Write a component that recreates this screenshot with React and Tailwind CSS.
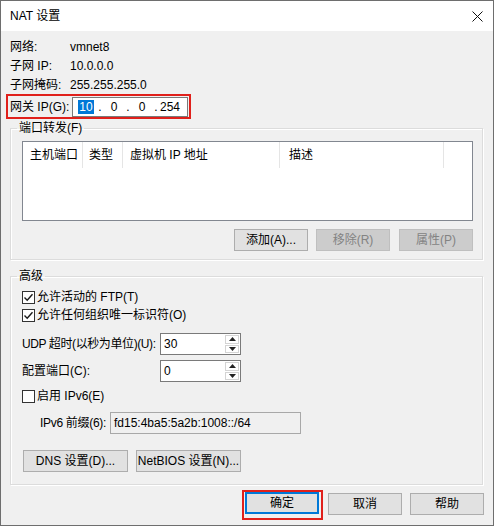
import React from "react";

const Check = ({ checked }) => (
  <span className="w-[13px] h-[13px] border border-[#333333] bg-white flex items-center justify-center shrink-0">
    {checked && (
      <svg width="11" height="11" viewBox="0 0 11 11">
        <path d="M1.5 5.5 L4.2 8.2 L9.5 2.2" fill="none" stroke="#1a1a1a" strokeWidth="1.4" />
      </svg>
    )}
  </span>
);

const Btn = ({ children, className = "", disabled }) => (
  <div
    className={
      "h-[22px] w-[74px] shrink-0 flex items-center justify-center border " +
      (disabled
        ? "bg-[#cccccc] border-[#bfbfbf] text-[#838383] "
        : "bg-[#e1e1e1] border-[#adadad] ") +
      className
    }
  >
    {children}
  </div>
);

const Spin = ({ value }) => (
  <div className="w-[81px] h-[22px] shrink-0 border border-[#7a7a7a] bg-white flex">
    <span className="pl-[3px] leading-[20px]">{value}</span>
    <div className="ml-auto w-[16px] flex flex-col p-[1px] gap-[1px]">
      <div className="flex-1 border border-[#d4d4d4] flex items-center justify-center">
        <svg width="7" height="4" viewBox="0 0 7 4">
          <path d="M0 4 L3.5 0 L7 4 Z" fill="#222" />
        </svg>
      </div>
      <div className="flex-1 border border-[#d4d4d4] flex items-center justify-center">
        <svg width="7" height="4" viewBox="0 0 7 4">
          <path d="M0 0 L3.5 4 L7 0 Z" fill="#222" />
        </svg>
      </div>
    </div>
  </div>
);

const groupBox =
  "w-[473px] border border-[#dcdcdc] shadow-[inset_1px_1px_0_#ffffff,1px_1px_0_#ffffff]";

export default function App() {
  return (
    <div className="w-[494px] h-[526px] border border-[#6e6e6e] bg-[#f0f0f0] flex flex-col text-[12px] leading-[16px] text-black whitespace-nowrap font-['Liberation_Sans','Noto_Sans_CJK_SC',sans-serif] overflow-hidden">
      {/* title bar */}
      <div className="h-[30px] bg-white flex items-center justify-between pl-[9px] pr-[10px] shrink-0">
        <span className="text-[12px]">NAT 设置</span>
        <svg width="11" height="11" viewBox="0 0 11 11">
          <path d="M0.5 0.5 L10.5 10.5 M10.5 0.5 L0.5 10.5" stroke="#111" strokeWidth="1" />
        </svg>
      </div>

      <div className="flex-1 pl-[9px] pt-[7px]">
        <div className="h-[18px] flex items-center">
          <span className="w-[60px] shrink-0">网络:</span>
          <span>vmnet8</span>
        </div>
        <div className="h-[19px] flex items-center">
          <span className="w-[60px] shrink-0">子网 IP:</span>
          <span>10.0.0.0</span>
        </div>
        <div className="h-[19px] flex items-center">
          <span className="w-[60px] shrink-0">子网掩码:</span>
          <span>255.255.255.0</span>
        </div>

        {/* gateway */}
        <div className="ml-[-4px] w-[185px] h-[25px] border-2 border-[#e0201b] flex items-center">
          <span className="w-[64px] shrink-0 pl-[2px]">网关 IP(G):</span>
          <div className="w-[116px] h-[20px] border border-[#7a7a7a] bg-white flex items-center pl-[1px]">
            <span className="w-[24px] text-center">
              <span className="bg-[#0078d7] text-white px-[1px]">10</span>
            </span>
            <span className="w-[4px] text-center">.</span>
            <span className="w-[24px] text-center">0</span>
            <span className="w-[4px] text-center">.</span>
            <span className="w-[24px] text-center">0</span>
            <span className="w-[4px] text-center">.</span>
            <span className="w-[24px] text-center">254</span>
          </div>
        </div>

        {/* port forwarding */}
        <fieldset className={groupBox + " mt-[2px] pb-[8px]"}>
          <legend className="ml-[6px] px-[2px] leading-[14px]">端口转发(F)</legend>
          <div className="ml-[11px] w-[451px]">
            <div className="mt-[6px] h-[80px] border border-[#828790] bg-white">
              <div className="h-[26px] flex">
                <div className="w-[60px] pl-[7px] flex items-center border-r border-[#e5e5e5]">主机端口</div>
                <div className="w-[40px] pl-[6px] flex items-center border-r border-[#e5e5e5]">类型</div>
                <div className="w-[157px] pl-[7px] flex items-center border-r border-[#e5e5e5]">虚拟机 IP 地址</div>
                <div className="w-[164px] pl-[9px] flex items-center border-r border-[#e5e5e5]">描述</div>
              </div>
            </div>
            <div className="mt-[8px] flex justify-end gap-[8px]">
              <Btn>添加(A)...</Btn>
              <Btn disabled className="mr-[1px]">移除(R)</Btn>
              <Btn disabled>属性(P)</Btn>
            </div>
          </div>
        </fieldset>

        {/* advanced */}
        <fieldset className={groupBox + " mt-[9px] pb-[12px]"}>
          <legend className="ml-[6px] px-[2px] leading-[14px]">高级</legend>
          <div className="mt-[5px] h-[18px] pl-[11px] flex items-center gap-[2px]">
            <Check checked />
            <span>允许活动的 FTP(T)</span>
          </div>
          <div className="h-[18px] pl-[11px] flex items-center gap-[2px]">
            <Check checked />
            <span>允许任何组织唯一标识符(O)</span>
          </div>
          <div className="mt-[9px] h-[22px] pl-[11px] flex items-center">
            <span className="w-[138px] shrink-0 tracking-[-0.4px]">UDP 超时(以秒为单位)(U):</span>
            <Spin value="30" />
          </div>
          <div className="mt-[5px] h-[22px] pl-[11px] flex items-center">
            <span className="w-[138px] shrink-0">配置端口(C):</span>
            <Spin value="0" />
          </div>
          <div className="mt-[5px] h-[18px] pl-[11px] flex items-center gap-[2px]">
            <Check />
            <span>启用 IPv6(E)</span>
          </div>
          <div className="mt-[7px] h-[22px] pl-[29px] flex items-center">
            <span className="w-[70px] shrink-0 tracking-[-0.3px]">IPv6 前缀(6):</span>
            <div className="w-[191px] h-[22px] border border-[#a8a8a8] bg-[#f0f0f0] pl-[3px] leading-[20px]">
              fd15:4ba5:5a2b:1008::/64
            </div>
          </div>
          <div className="mt-[16px] pl-[12px] flex gap-[8px]">
            <Btn className="w-[105px] h-[21px]">DNS 设置(D)...</Btn>
            <Btn className="w-[105px] h-[21px]">NetBIOS 设置(N)...</Btn>
          </div>
        </fieldset>

        {/* footer */}
        <div className="mt-[5px] w-[474px] flex justify-end items-start">
          <div className="w-[81px] h-[30px] border-2 border-[#e0201b] pl-[1px]">
            <div className="h-[22px] w-[74px] flex items-center justify-center border-2 border-[#0078d7] bg-[#e1e1e1]">
              确定
            </div>
          </div>
          <Btn className="mt-[3px] ml-[5px]">取消</Btn>
          <Btn className="mt-[3px] ml-[8px]">帮助</Btn>
        </div>
      </div>
    </div>
  );
}
